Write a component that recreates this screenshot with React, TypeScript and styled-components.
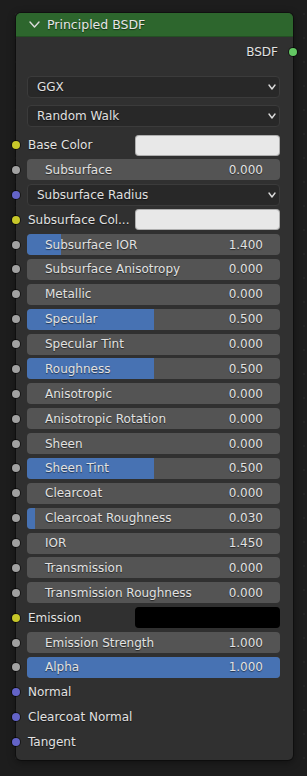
import styled, { createGlobalStyle } from "styled-components";

const GlobalStyle = createGlobalStyle`
    html, body {
        margin: 0;
        background: #1d1d1d;
    }
    body {
        font-family: "DejaVu Sans", "Liberation Sans", sans-serif;
    }
`;

const Canvas = styled.div`
    width: 307px;
    height: 776px;
    box-sizing: border-box;
    padding: 13px 14px 0 16px;
    background-color: #1d1d1d;
    background-image: radial-gradient(circle, #242424 1px, transparent 1.3px);
    background-size: 24px 24px;
    background-position: 4px 2px;
    overflow: hidden;
`;

const Node = styled.div`
    width: 277px;
    background: #303030;
    border-radius: 5px;
    box-shadow: 0 0 0 1px rgba(0, 0, 0, 0.35), 0 2px 8px rgba(0, 0, 0, 0.45);
    color: #e2e2e2;
    font-size: 12px;
    text-shadow: 0 1px 1px rgba(0, 0, 0, 0.55);
`;

const Header = styled.div`
    height: 24px;
    display: flex;
    align-items: center;
    gap: 7px;
    padding-left: 13px;
    background: #2d662d;
    border-radius: 5px 5px 0 0;
    border-bottom: 1px solid #244f24;
    box-sizing: border-box;
    font-size: 12.5px;
    color: #e6e6e6;
`;

const Body = styled.div`
    display: flex;
    flex-direction: column;
    padding: 4.5px 13px 7.5px 11px;
`;

const OutputRow = styled.div`
    position: relative;
    height: 21px;
    display: flex;
    align-items: center;
    justify-content: flex-end;
    padding-right: 2px;
`;

const Selects = styled.div`
    display: flex;
    flex-direction: column;
    gap: 7px;
    margin: 13.5px 0 7.5px;
`;

const Rows = styled.div`
    display: flex;
    flex-direction: column;
    gap: 3.875px;
`;

const Row = styled.div`
    position: relative;
    height: 21px;
    display: flex;
    align-items: center;
`;

const Socket = styled.span<{ $color: string; $side?: "left" | "right" }>`
    position: absolute;
    top: 50%;
    ${(p) => (p.$side === "right" ? "right: -17px;" : "left: -15px;")}
    width: 8px;
    height: 8px;
    margin-top: -4px;
    border-radius: 50%;
    background: ${(p) => p.$color};
    box-shadow: 0 0 0 1px rgba(0, 0, 0, 0.55);
`;

const Select = styled.div<{ $h?: number }>`
    width: 100%;
    height: ${(p) => p.$h ?? 22}px;
    box-sizing: border-box;
    display: flex;
    align-items: center;
    justify-content: space-between;
    padding: 0 3px 0 9px;
    background: #282828;
    border: 1px solid #3b3b3b;
    border-radius: 4px;
    color: #e0e0e0;
`;

const Slider = styled.div`
    position: relative;
    width: 100%;
    height: 21px;
    display: flex;
    align-items: center;
    justify-content: space-between;
    padding: 0 17px 0 18px;
    box-sizing: border-box;
    background: #545454;
    border-radius: 4px;
    overflow: hidden;
`;

const Fill = styled.span`
    position: absolute;
    left: 0;
    top: 0;
    bottom: 0;
    background: #4772b3;
`;

const SliderText = styled.span`
    position: relative;
`;

const Label = styled.span`
    flex: 1;
    padding-left: 1px;
    white-space: nowrap;
`;

const Swatch = styled.div<{ $color: string }>`
    width: 145px;
    height: 21px;
    border-radius: 4px;
    background: ${(p) => p.$color};
    box-shadow: inset 0 0 0 1px rgba(0, 0, 0, 0.25);
`;

const Chevron = ({ w, h }: { w: number; h: number }) => (
    <svg width={w + 2} height={h + 2} viewBox={`-1 -1 ${w + 2} ${h + 2}`}>
        <polyline
            points={`0,0 ${w / 2},${h} ${w},0`}
            fill="none"
            stroke="#dcdcdc"
            strokeWidth="1.4"
            strokeLinecap="round"
            strokeLinejoin="round"
        />
    </svg>
);

const YELLOW = "#c7c729";
const GREY = "#a1a1a1";
const PURPLE = "#6363c7";
const GREEN = "#63c763";

type RowData =
    | { kind: "color"; label: string; swatch: string }
    | { kind: "slider"; label: string; value: string; fill?: number }
    | { kind: "select"; label: string }
    | { kind: "label"; label: string };

const rows: { socket: string; data: RowData }[] = [
    { socket: YELLOW, data: { kind: "color", label: "Base Color", swatch: "#e8e8e8" } },
    { socket: GREY, data: { kind: "slider", label: "Subsurface", value: "0.000" } },
    { socket: PURPLE, data: { kind: "select", label: "Subsurface Radius" } },
    { socket: YELLOW, data: { kind: "color", label: "Subsurface Col...", swatch: "#e8e8e8" } },
    { socket: GREY, data: { kind: "slider", label: "Subsurface IOR", value: "1.400", fill: 0.134 } },
    { socket: GREY, data: { kind: "slider", label: "Subsurface Anisotropy", value: "0.000" } },
    { socket: GREY, data: { kind: "slider", label: "Metallic", value: "0.000" } },
    { socket: GREY, data: { kind: "slider", label: "Specular", value: "0.500", fill: 0.5 } },
    { socket: GREY, data: { kind: "slider", label: "Specular Tint", value: "0.000" } },
    { socket: GREY, data: { kind: "slider", label: "Roughness", value: "0.500", fill: 0.5 } },
    { socket: GREY, data: { kind: "slider", label: "Anisotropic", value: "0.000" } },
    { socket: GREY, data: { kind: "slider", label: "Anisotropic Rotation", value: "0.000" } },
    { socket: GREY, data: { kind: "slider", label: "Sheen", value: "0.000" } },
    { socket: GREY, data: { kind: "slider", label: "Sheen Tint", value: "0.500", fill: 0.5 } },
    { socket: GREY, data: { kind: "slider", label: "Clearcoat", value: "0.000" } },
    { socket: GREY, data: { kind: "slider", label: "Clearcoat Roughness", value: "0.030", fill: 0.03 } },
    { socket: GREY, data: { kind: "slider", label: "IOR", value: "1.450" } },
    { socket: GREY, data: { kind: "slider", label: "Transmission", value: "0.000" } },
    { socket: GREY, data: { kind: "slider", label: "Transmission Roughness", value: "0.000" } },
    { socket: YELLOW, data: { kind: "color", label: "Emission", swatch: "#000000" } },
    { socket: GREY, data: { kind: "slider", label: "Emission Strength", value: "1.000" } },
    { socket: GREY, data: { kind: "slider", label: "Alpha", value: "1.000", fill: 1 } },
    { socket: PURPLE, data: { kind: "label", label: "Normal" } },
    { socket: PURPLE, data: { kind: "label", label: "Clearcoat Normal" } },
    { socket: PURPLE, data: { kind: "label", label: "Tangent" } },
];

function RowContent({ data }: { data: RowData }) {
    switch (data.kind) {
        case "color":
            return (
                <>
                    <Label>{data.label}</Label>
                    <Swatch $color={data.swatch} />
                </>
            );
        case "slider":
            return (
                <Slider>
                    {data.fill ? <Fill style={{ width: `${data.fill * 100}%` }} /> : null}
                    <SliderText>{data.label}</SliderText>
                    <SliderText>{data.value}</SliderText>
                </Slider>
            );
        case "select":
            return (
                <Select $h={22}>
                    <span>{data.label}</span>
                    <Chevron w={6} h={4} />
                </Select>
            );
        default:
            return <Label>{data.label}</Label>;
    }
}

function App() {
    return (
        <Canvas>
            <GlobalStyle />
            <Node>
                <Header>
                    <Chevron w={9} h={5} />
                    <span>Principled BSDF</span>
                </Header>
                <Body>
                    <OutputRow>
                        <span>BSDF</span>
                        <Socket $color={GREEN} $side="right" />
                    </OutputRow>
                    <Selects>
                        <Select>
                            <span>GGX</span>
                            <Chevron w={6} h={4} />
                        </Select>
                        <Select>
                            <span>Random Walk</span>
                            <Chevron w={6} h={4} />
                        </Select>
                    </Selects>
                    <Rows>
                        {rows.map((r) => (
                            <Row key={r.data.label}>
                                <Socket $color={r.socket} />
                                <RowContent data={r.data} />
                            </Row>
                        ))}
                    </Rows>
                </Body>
            </Node>
        </Canvas>
    );
}

export default App;
